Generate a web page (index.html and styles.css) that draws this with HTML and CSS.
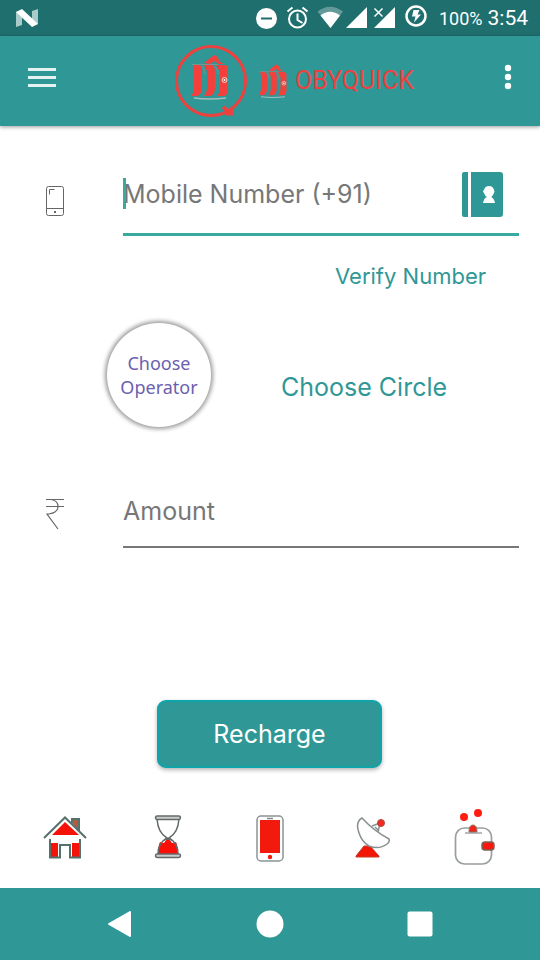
FILE: index.html
```html
<!DOCTYPE html>
<html lang="en">
<head>
<meta charset="utf-8">
<meta name="viewport" content="width=device-width, initial-scale=1">
<title>MobyQuick</title>
<link rel="stylesheet" href="styles.css">
</head>
<body>
<div class="status">
  <svg class="status-n" width="22" height="18" viewBox="0 0 22 18"><path d="M0 3 6 1v15l-6 2zM16 2l6-2v15l-6 2z" fill="#a9cccb"/><path d="M0 3 6 0 22 15l-6 3z" fill="#fff"/></svg>
  <div class="status-icons">
    <svg width="140" height="24" viewBox="0 0 140 24" fill="#fff">
      <circle cx="10.500" cy="12.500" r="10.500"/><path d="M5 11.500h11v2H5z" fill="#1f6f6e"/>
      <g fill="none" stroke="#fff" stroke-width="2"><circle cx="41.500" cy="13" r="8.500"/><path d="M41.500 7.500V14l5 3M31.500 5.500l5-4M46.500 1.500l5 4"/></g>
      <path d="M61.500 5.500Q74-4 87 5.500L74.500 22z" opacity=".3"/><path d="M64.500 9.500Q74 2 84 9.500L74.500 22z"/>
      <path d="M111 1v21H90z"/><path d="M139 1v21h-21z"/>
      <path d="M118 2.500l8 8M126 2.500l-8 8" stroke="#1f6f6e" stroke-width="4"/><path d="M118.500 2.500l8 8M126.500 2.500l-8 8" stroke="#fff" stroke-width="1.500"/>
    </svg>
    <svg class="charge" width="22" height="22" viewBox="0 0 22 22"><circle cx="11" cy="11" r="9.500" fill="none" stroke="#fff" stroke-width="2.500"/><path d="M8.500 5h6l-2 4.500H16L9 17.500l1.500-6H7z" fill="#fff"/></svg>
    <span class="battery">100%</span>
    <span class="clock">3:54</span>
  </div>
</div>
<header class="bar">
  <button class="icon-btn" aria-label="Menu"><svg width="28" height="20" viewBox="0 0 28 20"><path d="M0 2.500h28M0 10.500h28M0 18.500h28" stroke="#e4f3f2" stroke-width="3"/></svg></button>
  <div class="brand">
    <svg width="74" height="76" viewBox="0 0 74 76">
      <circle cx="37" cy="38" r="34.500" fill="none" stroke="#ec423f" stroke-width="3"/>
      <path d="M49 64l10 8M59 66l-7 6" stroke="#ec423f" stroke-width="4"/>
      <g id="purse">
        <path d="M30 20l10-8 4 2 1 4 5 3h-6l-3-3-5 3z" fill="#f0423f"/>
        <path d="M19 22h6q3 1 3 6v16q0 8-5 9h-6q3-3 3-9V28zM30 22h8q3 1 3 7v15q0 8-5 9h-6q3-3 3-9V28zM42 22h8q4 0 4 4v20q0 6-4 7h-7q3-3 3-9V29z" fill="#f3403d"/>
        <path d="M18 21.500h26M28 23q3 3 3 8M41 23q3 3 3 8" fill="none" stroke="#8a9691" stroke-width=".8"/>
        <circle cx="50.500" cy="37" r="2.500" fill="#f3403d" stroke="#e9d5cf"/><circle cx="50.500" cy="37" r="1" fill="#fff"/>
        <path d="M20 55q15 2 32 0" fill="none" stroke="#a7bdbb" stroke-width="1.500"/>
      </g>
    </svg>
    <span class="wordmark"><svg width="30" height="36" viewBox="16 10 40 48" aria-label="M"><use href="#purse"/></svg><span class="letters">OBYQUICK</span></span>
  </div>
  <button class="icon-btn" aria-label="More options"><svg width="8" height="26" viewBox="0 0 8 26" fill="#fff"><circle cx="4" cy="4" r="3.200"/><circle cx="4" cy="13" r="3.200"/><circle cx="4" cy="22" r="3.200"/></svg></button>
</header>
<main>
  <form>
    <div class="row">
      <label for="mobile" aria-label="Mobile number"><svg width="18" height="30" viewBox="0 0 18 30" fill="none" stroke="#666"><rect x=".5" y=".5" width="17" height="29" rx="2"/><path d="M.5 22.500h17M3.500 8.500v-5h5"/><rect x="8" y="25" width="2" height="2" fill="#666" stroke="none"/></svg></label>
      <div class="field active">
        <span class="caret"></span>
        <input id="mobile" type="tel" placeholder="Mobile Number (+91)">
        <button type="button" class="contacts" aria-label="Contacts"><svg width="41" height="45" viewBox="0 0 41 45"><path d="M2 0h4v45H2q-2 0-2-2V2q0-2 2-2zM9 0h29q3 0 3 3v39q0 3-3 3H9z" fill="#2f9896"/><path d="M27 14q4 0 5 4 1 1 0 3-2 4-3 4 3 1 4 6H21q1-5 4-6-2-1-3-4-2-2 0-3 1-4 5-4z" fill="#fff"/></svg></button>
      </div>
    </div>
    <a class="verify" href="#verify">Verify Number</a>
    <div class="choices">
      <button type="button" class="operator">Choose Operator</button>
      <a class="circle" href="#circle">Choose Circle</a>
    </div>
    <div class="row">
      <label for="amount" aria-label="Amount"><svg width="18" height="36" viewBox="0 0 18 36" fill="none" stroke="#666" stroke-width="1.200"><path d="M0 1.500h18M0 8.500h18M1 1.500h4q7 1 7 7t-9 7.500H1L12 31"/></svg></label>
      <div class="field"><input id="amount" type="text" inputmode="decimal" placeholder="Amount"></div>
    </div>
    <button type="submit" class="recharge">Recharge</button>
  </form>
  <nav class="tabs">
    <a href="#home" aria-label="Home"><svg width="44" height="60" viewBox="0 0 44 60"><path d="M29 15v-4h7v12" fill="#b55b3c" stroke="#56706c" stroke-width="2"/><path d="M7 35h30v15H7z" fill="#f51309"/><path d="M15 35h14v16H15z" fill="#fff"/><path d="M9 27 22 14l14 13z" fill="#f51309"/><path d="M1 30 22 9.500 43 30M7 31v18.500h10V37h10v12.500h10V31" fill="none" stroke="#56706c" stroke-width="2"/></svg></a>
    <a href="#history" aria-label="History"><svg width="28" height="60" viewBox="0 0 28 60"><path d="M4 46q0-8 2-12l4 1 3-4h2l3 4 4-1q2 4 2 12z" fill="#f90f08"/><path d="M3 11q1 14 10 19-9 5-9 16M25 11q-1 14-10 19 9 5 9 16M9 33q5-4 10 0" fill="none" stroke="#626b69" stroke-width="1.500"/><rect x="1.500" y="8" width="25" height="3.500" rx="1.700" fill="#ccc" stroke="#626b69" stroke-width="1.500"/><rect x="1.500" y="46" width="25" height="3.500" rx="1.700" fill="#ccc" stroke="#626b69" stroke-width="1.500"/></svg></a>
    <a href="#mobile" aria-label="Mobile"><svg width="28" height="60" viewBox="0 0 28 60"><rect x="1" y="8" width="26" height="45" rx="4" fill="#fff" stroke="#8c9492" stroke-width="1.500"/><path d="M4 12h20v33H4z" fill="#f21a0c"/><path d="M11 10.500h6" stroke="#888" stroke-width="1.500"/><circle cx="14" cy="49" r="2.200" fill="#f21a0c"/></svg></a>
    <a href="#dth" aria-label="DTH"><svg width="36" height="60" viewBox="0 0 36 60"><path d="m2 48 8-10h6l9 10v1H2z" fill="#f21609" stroke="#c43b2b"/><path d="m18 18 8-3-2 9M21 19l4 4" fill="none" stroke="#8b9391" stroke-width="1.500"/><circle cx="27" cy="15" r="3.500" fill="#f32a1d" stroke="#ad4b43"/><path d="M8 10Q1 14 5 25q3 9 10 13 10 4 18-2 3-2 2-5Q20 23 8 10z" fill="#fff" stroke="#87908e" stroke-width="1.500"/></svg></a>
    <a href="#wallet" aria-label="Wallet"><svg width="42" height="60" viewBox="0 0 42 60"><rect x="1.500" y="20" width="36" height="36" rx="9" fill="#fff" stroke="#999f9d" stroke-width="1.700"/><circle cx="10" cy="9" r="4" fill="#ff1d11"/><circle cx="24" cy="5" r="4" fill="#ff1d11"/><path d="M15 24q0-7 4-7t4 7z" fill="#f32318" stroke="#8f6f68" stroke-width="1"/><path d="M11 25h17" stroke="#777"/><rect x="28" y="34" width="12" height="8" rx="3" fill="#fb170e" stroke="#7d6159" stroke-width="1.500"/></svg></a>
  </nav>
</main>
<footer class="sysnav">
  <button aria-label="Back"><svg width="24" height="28" viewBox="0 0 24 28"><path d="M1 14 22 2v24z" fill="#fff" stroke="#fff" stroke-width="2" stroke-linejoin="round"/></svg></button>
  <button aria-label="Home"><svg width="28" height="28" viewBox="0 0 28 28"><circle cx="14" cy="14" r="13.500" fill="#fff"/></svg></button>
  <button aria-label="Recent apps"><svg width="26" height="26" viewBox="0 0 26 26"><rect x=".5" y=".5" width="25" height="25" rx="2" fill="#fff"/></svg></button>
</footer>
</body>
</html>
```
FILE: styles.css
```css
* { box-sizing: border-box; }
svg { display: block; }
body {
  margin: 0;
  min-height: 100vh;
  display: flex;
  flex-direction: column;
  background: #fff;
  font-family: Inter, "Open Sans", sans-serif;
}
button, input { font: inherit; border: 0; padding: 0; background: none; }
a { text-decoration: none; color: #2f9896; }

.status {
  height: 36px;
  padding: 0 12px 0 16px;
  display: flex;
  justify-content: space-between;
  align-items: center;
  background: #1f6f6e;
  color: #fff;
  font-family: Roboto, sans-serif;
}
.status-icons { display: flex; align-items: center; }
.status-icons .charge { margin: 0 12px 4px 9px; }
.battery { font-size: 18px; margin-right: 5px; }
.clock { font-size: 21px; }

.bar {
  height: 90px;
  padding: 0 28px;
  display: flex;
  justify-content: space-between;
  align-items: center;
  background: #2f9896;
  box-shadow: 0 1px 4px rgba(0, 0, 0, .4);
}
.icon-btn { padding-bottom: 8px; }
.brand { display: flex; align-items: center; gap: 10px; margin-left: 28px; }
.wordmark { display: flex; align-items: center; gap: 7px; }
.letters {
  font-family: Roboto, sans-serif;
  font-size: 25px;
  line-height: 32px;
  color: #ec423f;
}

main { flex: 1; display: flex; flex-direction: column; justify-content: space-between; }
form { padding: 32px 21px 0 0; display: flex; flex-direction: column; }
.row { display: grid; grid-template-columns: 123px minmax(0, 1fr); align-items: center; }
.row label { display: flex; padding: 8px 0 0 46px; }
.field {
  position: relative;
  display: flex;
  align-items: center;
  height: 73px;
  border-bottom: 2px solid #777;
}
.field.active { height: 78px; padding: 0 16px 3px 0; border-bottom: 3px solid #38ab9f; }
.field input { flex: 1; min-width: 0; height: 40px; font-size: 25px; outline: 0; color: #444; }
.field input::placeholder { color: #777; opacity: 1; }
.caret { position: absolute; left: 0; top: 20px; width: 3px; height: 31px; background: #38ab9f; }
.verify { align-self: flex-end; margin: 28px 33px 0 0; font-size: 22px; line-height: 24px; }
.choices { display: flex; align-items: center; gap: 70px; margin: 35px 0 48px 107px; }
.operator {
  width: 104px;
  height: 104px;
  border-radius: 50%;
  background: #fff;
  box-shadow: 0 0 4px 2px rgba(0, 0, 0, .4);
  color: #6c5fb0;
  font-family: "Noto Sans", sans-serif;
  font-size: 18px;
  line-height: 24px;
}
.circle { font-size: 25px; line-height: 30px; padding-top: 24px; }
.recharge {
  align-self: center;
  width: 225px;
  height: 68px;
  margin: 152px 0 0 20px;
  border: 2px solid #0ea5aa;
  border-radius: 9px;
  background: #2f9896;
  color: #fff;
  font-size: 25px;
  box-shadow: 0 2px 4px rgba(0, 0, 0, .3);
}
.tabs { display: grid; grid-template-columns: repeat(5, 1fr); justify-items: center; padding: 0 14px 20px; }

.sysnav {
  height: 72px;
  padding: 0 45px;
  display: grid;
  grid-template-columns: repeat(3, 1fr);
  justify-items: center;
  align-items: center;
  background: #2f9896;
}
```
